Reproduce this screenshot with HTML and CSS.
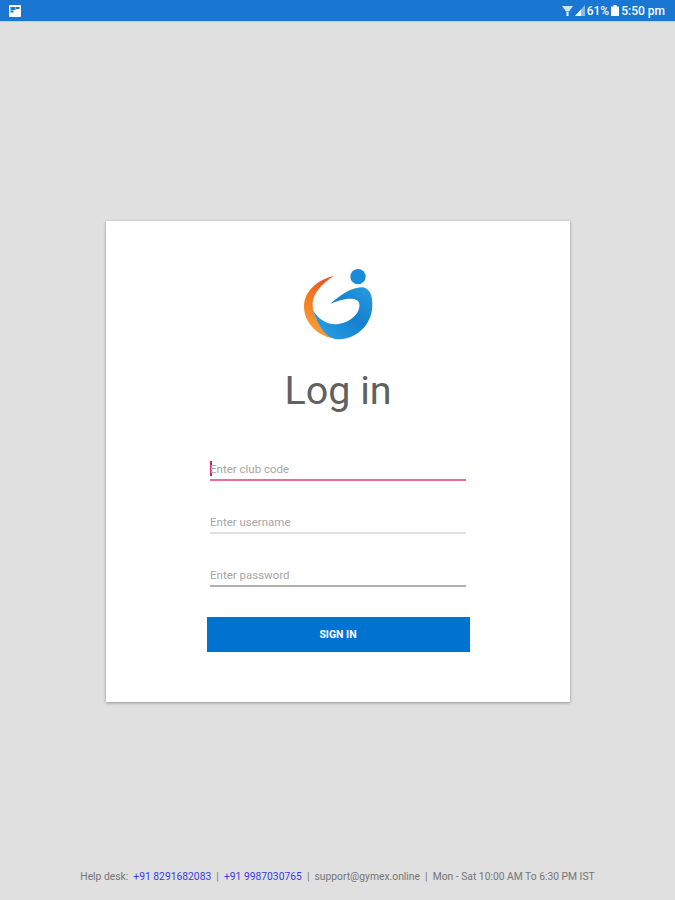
FILE: index.html
```html
<!DOCTYPE html>
<html lang="en">
<head>
    <meta charset="UTF-8">
    <meta name="viewport" content="width=device-width, initial-scale=1.0">
    <title>Log in</title>
    <link rel="stylesheet" href="styles.css">
</head>
<body>
    <div class="status-bar">
        <svg class="status-thumb" width="12" height="12" viewBox="0 0 12 12">
            <rect width="12" height="12" rx="1" fill="#fff"/>
            <rect x="1.5" y="2" width="5" height="3" fill="#1976d2"/>
            <rect x="7" y="2" width="3.5" height="2" fill="#1976d2"/>
            <rect x="1.5" y="5.5" width="3" height="2" fill="#1976d2"/>
        </svg>
        <div class="status-right">
            <svg width="11" height="12" viewBox="0 0 11 12">
                <path d="M0 1h11L7 6.500H4z" fill="#fff" opacity="0.8"/>
                <path d="M4.500 7h2v4h-2z" fill="#fff"/>
            </svg>
            <svg width="10" height="11" viewBox="0 0 10 11">
                <path d="M10 0v11H0z" fill="#fff" opacity="0.5"/>
                <path d="M6 4.500v6.500H0z" fill="#fff"/>
            </svg>
            <span class="status-text">61%</span>
            <svg width="8" height="11" viewBox="0 0 8 11">
                <path d="M2.500 0h3v1.500H8V11H0V1.500h2.500z" fill="#fff"/>
            </svg>
            <span class="status-text">5:50 pm</span>
        </div>
    </div>

    <div class="content">
        <div class="login-card">
            <svg class="logo" width="72" height="74" viewBox="36 21 216 222">
                <defs>
                    <linearGradient id="orange" x1="0.7" y1="0" x2="0.4" y2="1">
                        <stop offset="0" stop-color="#e8502a"/>
                        <stop offset="0.45" stop-color="#f47b20"/>
                        <stop offset="1" stop-color="#f9a13a"/>
                    </linearGradient>
                    <linearGradient id="blue" x1="0" y1="1" x2="1" y2="0">
                        <stop offset="0" stop-color="#2ba6ea"/>
                        <stop offset="0.55" stop-color="#1480cf"/>
                        <stop offset="1" stop-color="#2a9be0"/>
                    </linearGradient>
                </defs>
                <path d="M132 48C80 60 42 95 42 140C42 185 80 225 125 234C95 210 66 170 68 130C70 100 95 70 132 48Z" fill="url(#orange)"/>
                <path d="M120 132C150 105 190 78 220 82C245 88 250 120 246 150C238 205 190 240 140 238C110 235 85 200 68 150C85 178 112 196 145 192C182 187 212 160 208 130C203 112 170 110 120 132Z" fill="url(#blue)"/>
                <circle cx="204" cy="50" r="23" fill="#1a8bd8"/>
            </svg>
            <h1 class="title">Log in</h1>
            <form class="login-form">
                <div class="field field-active"><span class="caret"></span><span class="placeholder">Enter club code</span></div>
                <div class="field field-light"><span class="placeholder">Enter username</span></div>
                <div class="field field-dark"><span class="placeholder">Enter password</span></div>
                <button class="sign-in" type="button">SIGN IN</button>
            </form>
        </div>
    </div>

    <div class="footer">
        Help desk: &nbsp;<span class="phone">+91 8291682083</span> &nbsp;|&nbsp; <span class="phone">+91 9987030765</span> &nbsp;|&nbsp; support@gymex.online &nbsp;|&nbsp; Mon - Sat 10:00 AM To 6:30 PM IST
    </div>
</body>
</html>
```

FILE: styles.css
```css
html, body {
    height: 100%;
}

body {
    margin: 0;
    height: 900px;
    display: flex;
    flex-direction: column;
    font-family: Roboto, "Liberation Sans", sans-serif;
    background-color: #e0e0e0;
    overflow: hidden;
}

.status-bar {
    height: 21px;
    flex-shrink: 0;
    display: flex;
    align-items: center;
    justify-content: space-between;
    padding: 0 10px 0 9px;
    background-color: #1976d2;
    box-shadow: 0 1px 1px rgba(0,0,0,0.08);
}

.status-right {
    display: flex;
    align-items: center;
    gap: 2px;
}

.status-text {
    color: #fff;
    font-size: 12px;
    font-weight: 500;
}

.content {
    flex-grow: 1;
    padding-top: 200px;
}

.login-card {
    box-sizing: border-box;
    width: 464px;
    height: 481px;
    margin-left: 106px;
    padding-top: 46px;
    display: flex;
    flex-direction: column;
    align-items: center;
    background-color: #fff;
    box-shadow: 0 1px 3px rgba(0,0,0,0.35);
}

.title {
    margin: 28px 0 0;
    color: #616161;
    font-size: 39.5px;
    font-weight: 400;
    line-height: 44px;
}

.login-form {
    width: 263px;
    margin-top: 48px;
    display: flex;
    flex-direction: column;
    align-items: center;
}

.field {
    box-sizing: border-box;
    width: 256px;
    height: 20px;
    margin-bottom: 33px;
    padding-bottom: 3px;
    display: flex;
    align-items: center;
    border-bottom: 2px solid #e0e0e0;
}

.field-active {
    border-bottom-color: #ec6c96;
}

.field-dark {
    margin-bottom: 30px;
    border-bottom-color: #b0b0b0;
}

.caret {
    width: 2px;
    height: 15px;
    margin-right: -2px;
    background-color: #d81b60;
}

.placeholder {
    color: #a6a6a6;
    font-size: 11.5px;
}

.sign-in {
    width: 263px;
    height: 35px;
    border: none;
    background-color: #0073d1;
    color: #fff;
    font-family: inherit;
    font-size: 10.5px;
    font-weight: 700;
}

.footer {
    box-sizing: border-box;
    height: 31px;
    padding-top: 1px;
    flex-shrink: 0;
    color: #757575;
    font-size: 10.3px;
    text-align: center;
    white-space: nowrap;
}

.phone {
    color: #3a3ae0;
}
```
